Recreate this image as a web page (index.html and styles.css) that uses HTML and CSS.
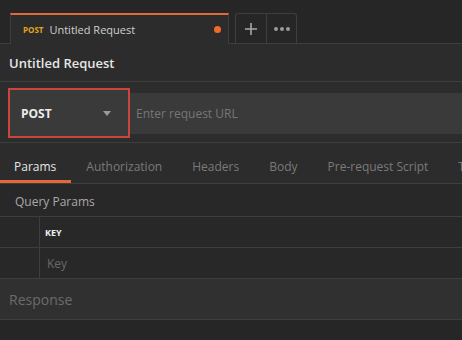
FILE: index.html
```html
<!DOCTYPE html>
<html lang="en">
<head>
    <meta charset="UTF-8">
    <meta name="viewport" content="width=device-width, initial-scale=1.0">
    <title>Untitled Request</title>
    <link rel="stylesheet" href="styles.css">
</head>
<body>
    <div class="tabbar">
        <div class="tab">
            <span class="tab-method">POST</span>
            <span class="tab-name">Untitled Request</span>
            <span class="dot"></span>
        </div>
        <div class="tab-actions">
            <div class="tab-btn">
                <svg width="14" height="14" viewBox="0 0 14 14"><path d="M7 1v12M1 7h12" stroke="#a8a8a8" stroke-width="1.6"/></svg>
            </div>
            <div class="tab-btn">
                <svg width="18" height="6" viewBox="0 0 18 6"><circle cx="3" cy="3" r="2" fill="#9a9a9a"/><circle cx="9" cy="3" r="2" fill="#9a9a9a"/><circle cx="15" cy="3" r="2" fill="#9a9a9a"/></svg>
            </div>
        </div>
    </div>

    <div class="title">Untitled Request</div>

    <div class="urlbar">
        <div class="method">
            <span>POST</span>
            <svg width="8" height="5" viewBox="0 0 8 5"><path d="M0 0h8L4 5z" fill="#9a9a9a"/></svg>
        </div>
        <div class="url">Enter request URL</div>
    </div>

    <div class="tabs">
        <div class="rtab active">Params</div>
        <div class="rtab">Authorization</div>
        <div class="rtab">Headers</div>
        <div class="rtab">Body</div>
        <div class="rtab">Pre-request Script</div>
        <div class="rtab">Tests</div>
    </div>

    <div class="section-title">Query Params</div>
    <div class="row head">
        <div class="cell-check"></div>
        <div class="cell">KEY</div>
    </div>
    <div class="row">
        <div class="cell-check"></div>
        <div class="cell placeholder">Key</div>
    </div>

    <div class="response">Response</div>
    <div class="bottom"></div>
</body>
</html>
```

FILE: styles.css
```css
*{
    margin:0;
    padding:0;
    box-sizing: border-box;
}
body{
    width: 462px;
    height: 340px;
    overflow: hidden;
    background-color: #282828;
    font-family: "Open Sans", "Liberation Sans", sans-serif;
    color: #e0e0e0;
}
.tabbar{
    height: 44px;
    padding: 13px 0 0 10px;
    background-color: #262626;
    border-bottom: 1px solid #3e3e3e;
    display: flex;
    align-items: flex-end;
}
.tab{
    width: 219px;
    height: 31px;
    margin-bottom: -1px;
    padding: 0 0 0 12px;
    background-color: #2c2c2c;
    border: 1px solid #3e3e3e;
    border-top: 2px solid #e2673a;
    border-bottom: none;
    display: flex;
    align-items: center;
}
.tab-method{
    color: #e2a41b;
    font-size: 8px;
    font-weight: 700;
    margin-right: 6px;
}
.tab-name{
    font-size: 11px;
    color: #cfcfcf;
}
.dot{
    width: 7px;
    height: 7px;
    border-radius: 50%;
    background-color: #f06b26;
    margin-left: auto;
    margin-right: 7px;
}
.tab-actions{
    display: flex;
    height: 30px;
    margin-left: 6px;
    border: 1px solid #3e3e3e;
    border-bottom: none;
    border-radius: 3px 3px 0 0;
}
.tab-btn{
    width: 30px;
    display: flex;
    align-items: center;
    justify-content: center;
}
.tab-btn + .tab-btn{
    border-left: 1px solid #3e3e3e;
}
.title{
    height: 38px;
    padding-left: 9px;
    background-color: #2c2c2c;
    border-bottom: 1px solid #3e3e3e;
    display: flex;
    align-items: center;
    font-size: 13px;
    font-weight: 600;
    color: #e6e6e6;
}
.urlbar{
    height: 61px;
    background-color: #2c2c2c;
    border-bottom: 1px solid #3e3e3e;
    display: flex;
    align-items: center;
    padding: 6px 0 4px 8px;
}
.method{
    width: 122px;
    height: 50px;
    border: 2px solid #c9463f;
    background-color: #3a3a3a;
    display: flex;
    align-items: center;
    justify-content: space-between;
    padding: 0 17px 0 11px;
    font-size: 12px;
    font-weight: 700;
    color: #ececec;
}
.url{
    flex: 1;
    height: 41px;
    background-color: #3a3a3a;
    display: flex;
    align-items: center;
    padding-left: 6px;
    font-size: 12px;
    color: #767676;
}
.tabs{
    height: 41px;
    background-color: #2c2c2c;
    border-bottom: 1px solid #3e3e3e;
    display: flex;
    white-space: nowrap;
    overflow: hidden;
}
.rtab{
    padding: 10px 15px 0 14px;
    display: flex;
    align-items: center;
    font-size: 12px;
    color: #7a7a7a;
    border-bottom: 3px solid transparent;
}
.rtab + .rtab{
    padding-left: 15px;
    padding-right: 15px;
}
.rtab.active{
    color: #e6e6e6;
    border-bottom-color: #e2673a;
}
.section-title{
    height: 33px;
    padding: 3px 0 0 15px;
    border-bottom: 1px solid #3e3e3e;
    display: flex;
    align-items: center;
    font-size: 12px;
    color: #a8a8a8;
}
.row{
    height: 31px;
    display: flex;
    border-bottom: 1px solid #3e3e3e;
}
.cell-check{
    width: 40px;
    border-right: 1px solid #3e3e3e;
}
.cell{
    display: flex;
    align-items: center;
    padding-left: 5px;
    font-size: 12px;
}
.head .cell{
    font-size: 9px;
    font-weight: 700;
    color: #f0f0f0;
}
.cell.placeholder{
    padding-left: 7px;
    color: #686868;
}
.response{
    height: 41px;
    padding-left: 9px;
    background-color: #303030;
    border-bottom: 1px solid #3e3e3e;
    display: flex;
    align-items: center;
    font-size: 14px;
    color: #6c6c6c;
}
.bottom{
    height: 20px;
    background-color: #262626;
}
```
